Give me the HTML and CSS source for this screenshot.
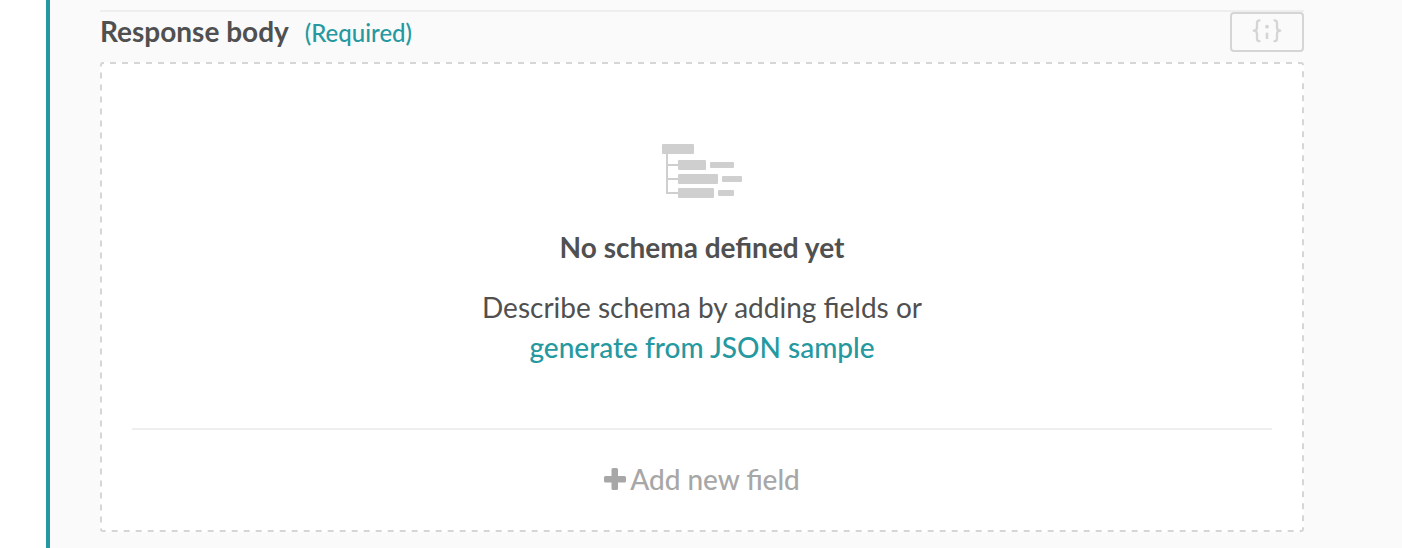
FILE: index.html
```html
<!DOCTYPE html>
<html lang="en">
<head>
<meta charset="utf-8">
<title>Response body</title>
<link rel="stylesheet" href="styles.css">
</head>
<body>
<main class="panel">
  <section class="response">
    <header class="response-header">
      <h2 class="title">Response body</h2>
      <span class="required">(Required)</span>
      <button class="json-button" type="button" aria-label="Edit as JSON">
        <svg width="30" height="24" viewBox="0 0 30 24" fill="none" stroke="currentColor" stroke-width="2.3" stroke-linecap="round" stroke-linejoin="round" aria-hidden="true">
          <path d="M7.500 1.300Q5 1.300 5 4V8.500Q5 11.700 1.700 11.700Q5 11.700 5 15V19.500Q5 22.200 7.500 22.200"/>
          <path d="M22.500 1.300Q25 1.300 25 4V8.500Q25 11.700 28.300 11.700Q25 11.700 25 15V19.500Q25 22.200 22.500 22.200"/>
          <circle cx="15" cy="7.700" r="1.900" fill="currentColor" stroke="none"/>
          <path d="M15 13.700V20" stroke-linecap="butt" stroke-width="2.600"/>
        </svg>
      </button>
    </header>
    <div class="schema">
      <svg class="outline" aria-hidden="true"><rect x="1" y="1" rx="2"/></svg>
      <div class="empty">
        <svg class="tree" width="80" height="54" viewBox="0 0 80 54" fill="currentColor" aria-hidden="true">
          <rect width="32" height="10" rx="1"/>
          <path d="M4 10H6V20H16V22H6V34H16V36H6V48H16V50H4Z"/>
          <rect x="16" y="16" width="28" height="10" rx="1"/>
          <rect x="16" y="30" width="40" height="10" rx="1"/>
          <rect x="16" y="44" width="36" height="10" rx="1"/>
          <rect x="48" y="18" width="24" height="6" rx="1"/>
          <rect x="60" y="32" width="20" height="6" rx="1"/>
          <rect x="56" y="46" width="16" height="6" rx="1"/>
        </svg>
        <h3 class="empty-title">No schema defined yet</h3>
        <p class="empty-text">Describe schema by adding fields or<br><a class="generate" href="#">generate from JSON sample</a></p>
      </div>
      <div class="footer">
        <button class="add" type="button">
          <svg width="22" height="22" viewBox="0 0 22 22" fill="currentColor" aria-hidden="true"><path d="M9 0H12.500Q14 0 14 1.500V8H20.500Q22 8 22 9.500V13Q22 14.500 20.500 14.500H14V20.500Q14 22 12.500 22H9Q7.500 22 7.500 20.500V14.500H1.500Q0 14.500 0 13V9.500Q0 8 1.500 8H7.500V1.500Q7.500 0 9 0Z"/></svg>
          <span>Add new field</span>
        </button>
      </div>
    </div>
  </section>
</main>
</body>
</html>
```
FILE: styles.css
```css
* {
  box-sizing: border-box;
}

body {
  margin: 0;
  background: #fff;
  color: #505050;
  font-family: Lato, sans-serif;
  font-size: 28px;
  line-height: 40px;
}

.panel {
  min-height: 100vh;
  margin-left: 46px;
  padding: 10px 98px 16px 50px;
  border-left: 4px solid #25999f;
  background: #fafafa;
}

.response {
  border-top: 2px solid #eee;
}

.response-header {
  display: flex;
  align-items: baseline;
  gap: 16px;
  margin-bottom: 10px;
}

.title,
.empty-title {
  margin: 0;
  font-size: 28px;
  font-weight: 700;
}

.title {
  line-height: 38px;
}

.required {
  color: #25999f;
  font-size: 24px;
  font-weight: 500;
  line-height: 38px;
}

.json-button {
  display: flex;
  align-items: center;
  align-self: flex-start;
  justify-content: center;
  width: 74px;
  height: 40px;
  margin-left: auto;
  padding: 0 0 2px;
  border: 2px solid #d5d5d5;
  border-radius: 4px;
  background: transparent;
  color: #d5d5d5;
}

.schema {
  position: relative;
  padding: 2px 32px;
  border-radius: 3px;
  background: #fff;
  text-align: center;
}

.outline {
  position: absolute;
  inset: 0;
  width: 100%;
  height: 100%;
  pointer-events: none;
}

.outline rect {
  width: calc(100% - 2px);
  height: calc(100% - 2px);
  fill: none;
  stroke: #d6d6d6;
  stroke-width: 2px;
  stroke-dasharray: 6px 6px;
  stroke-dashoffset: 5px;
}

.empty {
  padding: 80px 0 61px;
}

.tree {
  display: block;
  margin: 0 auto 29px;
  color: #cfcfcf;
}

.empty-text {
  margin: 20px 0 0;
}

.generate {
  color: #25999f;
  font-weight: 500;
  text-decoration: none;
}

.footer {
  padding: 29px 0 31px;
  border-top: 2px solid #eee;
}

.add {
  display: inline-flex;
  align-items: center;
  gap: 4px;
  padding: 0;
  border: 0;
  background: none;
  color: #a7a7a7;
  font: inherit;
  font-weight: 500;
}
```
